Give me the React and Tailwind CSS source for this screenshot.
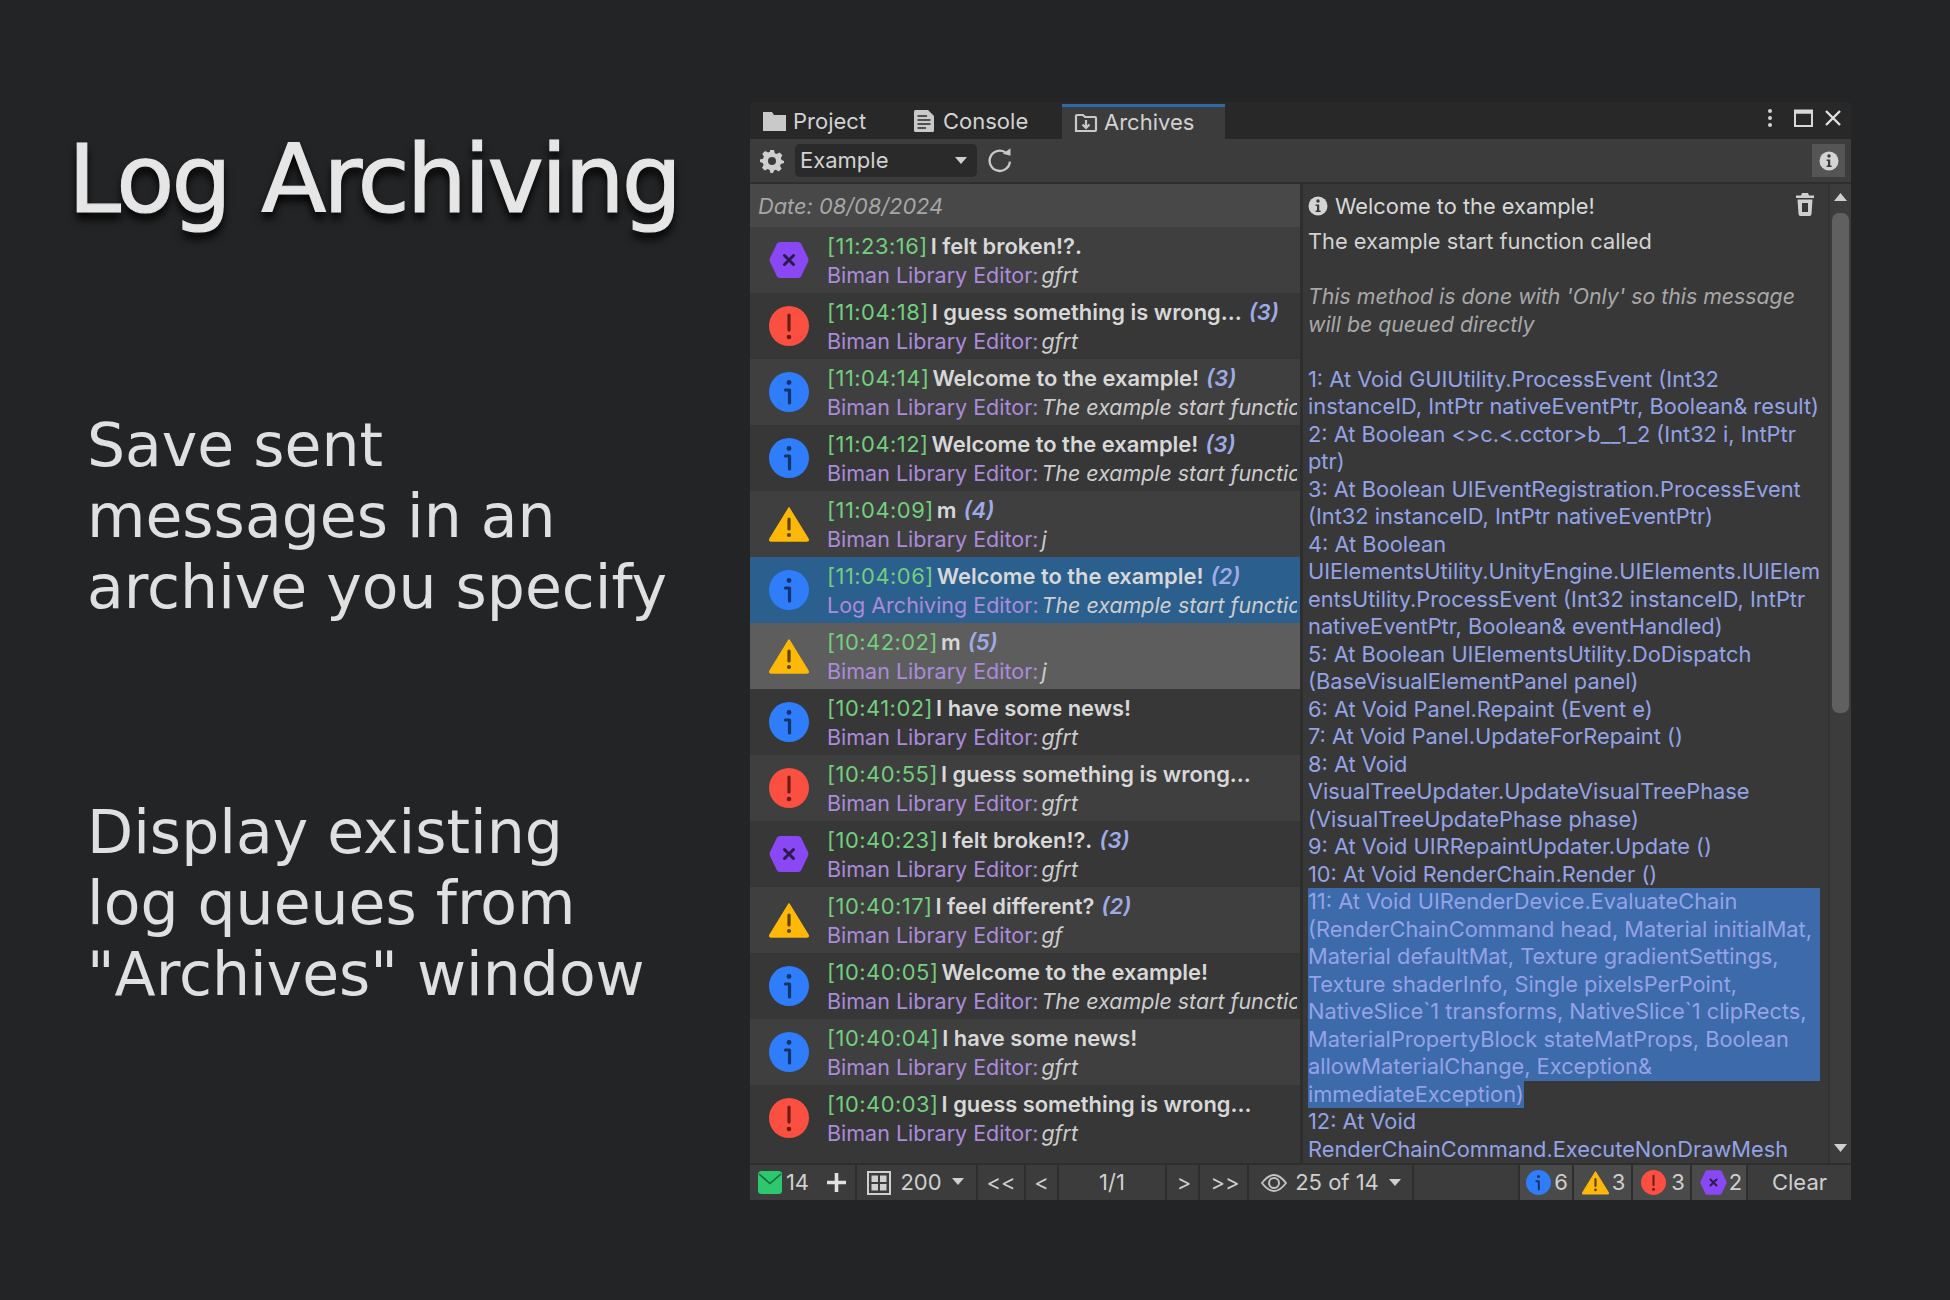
import React from "react";

const Hex = ({ s = 40 }) => (
  <svg width={s} height={s} viewBox="0 0 40 40">
    <path d="M8 3.5 Q9 2 11 2 H29 Q31 2 32 3.5 L39 18 Q39.9 20 39 22 L32 36.5 Q31 38 29 38 H11 Q9 38 8 36.5 L1 22 Q0.1 20 1 18 Z" fill="#8a48f4" />
    <path d="M15.5 15.5 L24.5 24.5 M24.5 15.5 L15.5 24.5" stroke="#2c1a4d" strokeWidth="3" strokeLinecap="round" />
  </svg>
);
const Err = ({ s = 40 }) => (
  <svg width={s} height={s} viewBox="0 0 40 40">
    <circle cx="20" cy="20" r="20" fill="#fa4f41" />
    <path d="M20 9 V24" stroke="#6a1c16" strokeWidth="3.2" strokeLinecap="round" />
    <circle cx="20" cy="31" r="2.3" fill="#6a1c16" />
  </svg>
);
const Info = ({ s = 40 }) => (
  <svg width={s} height={s} viewBox="0 0 40 40">
    <circle cx="20" cy="20" r="20" fill="#2f7dfb" />
    <circle cx="20" cy="10.5" r="2.4" fill="#13336b" />
    <path d="M16.5 18 H20.5 V31" fill="none" stroke="#13336b" strokeWidth="3.2" strokeLinecap="round" strokeLinejoin="round" />
  </svg>
);
const Warn = ({ s = 40 }) => (
  <svg width={s} height={s} viewBox="0 0 40 40">
    <path d="M20 4 L39 35 Q40 37 37.5 37 H2.5 Q0 37 1 35 Z" fill="#fdb808" stroke="#fdb808" strokeWidth="1.5" strokeLinejoin="round" />
    <path d="M20 15 V25" stroke="#5c4308" strokeWidth="3.2" strokeLinecap="round" />
    <circle cx="20" cy="31" r="2.1" fill="#5c4308" />
  </svg>
);
const icons = { hex: Hex, err: Err, info: Info, warn: Warn };

const rows = [
  ["hex", "[11:23:16]", "I felt broken!?.", "", "Biman Library Editor:", "gfrt"],
  ["err", "[11:04:18]", "I guess something is wrong...", "(3)", "Biman Library Editor:", "gfrt"],
  ["info", "[11:04:14]", "Welcome to the example!", "(3)", "Biman Library Editor:", "The example start function called"],
  ["info", "[11:04:12]", "Welcome to the example!", "(3)", "Biman Library Editor:", "The example start function called"],
  ["warn", "[11:04:09]", "m", "(4)", "Biman Library Editor:", "j"],
  ["info", "[11:04:06]", "Welcome to the example!", "(2)", "Log Archiving Editor:", "The example start function called"],
  ["warn", "[10:42:02]", "m", "(5)", "Biman Library Editor:", "j"],
  ["info", "[10:41:02]", "I have some news!", "", "Biman Library Editor:", "gfrt"],
  ["err", "[10:40:55]", "I guess something is wrong...", "", "Biman Library Editor:", "gfrt"],
  ["hex", "[10:40:23]", "I felt broken!?.", "(3)", "Biman Library Editor:", "gfrt"],
  ["warn", "[10:40:17]", "I feel different?", "(2)", "Biman Library Editor:", "gf"],
  ["info", "[10:40:05]", "Welcome to the example!", "", "Biman Library Editor:", "The example start function called"],
  ["info", "[10:40:04]", "I have some news!", "", "Biman Library Editor:", "gfrt"],
  ["err", "[10:40:03]", "I guess something is wrong...", "", "Biman Library Editor:", "gfrt"],
];

const linesA = [
  "1: At Void GUIUtility.ProcessEvent (Int32",
  "instanceID, IntPtr nativeEventPtr, Boolean& result)",
  "2: At Boolean <>c.<.cctor>b__1_2 (Int32 i, IntPtr",
  "ptr)",
  "3: At Boolean UIEventRegistration.ProcessEvent",
  "(Int32 instanceID, IntPtr nativeEventPtr)",
  "4: At Boolean",
  "UIElementsUtility.UnityEngine.UIElements.IUIElem",
  "entsUtility.ProcessEvent (Int32 instanceID, IntPtr",
  "nativeEventPtr, Boolean& eventHandled)",
  "5: At Boolean UIElementsUtility.DoDispatch",
  "(BaseVisualElementPanel panel)",
  "6: At Void Panel.Repaint (Event e)",
  "7: At Void Panel.UpdateForRepaint ()",
  "8: At Void",
  "VisualTreeUpdater.UpdateVisualTreePhase",
  "(VisualTreeUpdatePhase phase)",
  "9: At Void UIRRepaintUpdater.Update ()",
  "10: At Void RenderChain.Render ()",
];
const linesSel = [
  "11: At Void UIRenderDevice.EvaluateChain",
  "(RenderChainCommand head, Material initialMat,",
  "Material defaultMat, Texture gradientSettings,",
  "Texture shaderInfo, Single pixelsPerPoint,",
  "NativeSlice`1 transforms, NativeSlice`1 clipRects,",
  "MaterialPropertyBlock stateMatProps, Boolean",
  "allowMaterialChange, Exception&",
];
const linesB = ["12: At Void", "RenderChainCommand.ExecuteNonDrawMesh"];

function Row({ r, i }) {
  const Icon = icons[r[0]];
  const bg =
    i === 5 ? "bg-[#2b5f8e]" : i === 6 ? "bg-[#5d5d5d]" : i % 2 === 0 ? "bg-[#3f3f3f]" : "bg-[#373737]";
  return (
    <div className={`flex h-[66px] shrink-0 items-center overflow-hidden pr-[3px] ${bg}`}>
      <div className="flex w-[77px] shrink-0 justify-center">
        <Icon />
      </div>
      <div className="min-w-0 flex-1 overflow-hidden whitespace-nowrap leading-[30px]">
        <div className="flex text-[21.9px]">
          <span className="tracking-[0.5px] text-[#73cf7e]">{r[1]}</span>
          <span className="ml-[3px] font-semibold text-[#d8d8d8]">{r[2]}</span>
          {r[3] && <span className="ml-[7px] font-semibold italic text-[#9fabe6]">{r[3]}</span>}
        </div>
        <div className="-mt-[1px] flex">
          <span className="text-[21.5px] text-[#ab8bdb]">{r[4]}</span>
          <span className="ml-[3px] text-[21.4px] italic text-[#cdcdcd]">{r[5]}</span>
        </div>
      </div>
    </div>
  );
}

const Seg = ({ className = "", children }) => (
  <div className={`flex h-full shrink-0 items-center justify-center border-r-[2px] border-[#2e2e2e] bg-[#3c3c3c] ${className}`}>
    {children}
  </div>
);

const Caret = ({ className = "" }) => (
  <svg width="14" height="9" viewBox="0 0 14 9" className={className}>
    <path d="M1 1 H13 L7 8 Z" fill="#cfcfcf" />
  </svg>
);

const InfoMono = ({ s = 20 }) => (
  <svg width={s} height={s} viewBox="0 0 20 20">
    <circle cx="10" cy="10" r="9.5" fill="#d4d4d4" />
    <circle cx="10" cy="5" r="1.7" fill="#3a3a3a" />
    <path d="M7.6 8.5 H11.2 V14.5 H12.6 V16 H7.6 V14.5 H9 V10 H7.6 Z" fill="#3a3a3a" />
  </svg>
);

export default function App() {
  return (
    <div className="flex h-[1300px] w-[1950px] overflow-hidden bg-[#232426] font-['Inter',sans-serif]">
      <div className="w-[750px] shrink-0 font-['DejaVu_Sans',sans-serif]">
        <h1 className="ml-[68px] mt-[119px] whitespace-nowrap text-[95px] font-normal leading-[120px] tracking-[-2.9px] text-[#e6e6e6] [word-spacing:5px] [-webkit-text-stroke:1.2px_#e6e6e6] [text-shadow:0_7px_9px_#000]">
          Log Archiving
        </h1>
        <p className="ml-[87px] mt-[171px] text-[60px] leading-[71px] text-[#e0e0e0]">
          Save sent
          <br />
          messages in an
          <br />
          archive you specify
        </p>
        <p className="ml-[87px] mt-[174px] text-[60px] leading-[71px] text-[#e0e0e0]">
          Display existing
          <br />
          log queues from
          <br />
          "Archives" window
        </p>
      </div>

      <div className="mt-[102px] flex h-[1098px] w-[1101px] shrink-0 flex-col overflow-hidden rounded-t-[3px] bg-[#282828] text-[22px] text-[#d2d2d2]">
        {/* Tabs */}
        <div className="flex h-[37px] shrink-0 items-end pl-[13px]">
          <div className="flex h-[34px] w-[148px] items-center gap-[7px] pb-[2px]">
            <svg width="23" height="20" viewBox="0 0 23 20">
              <path d="M0 1 H9 L11 4 H23 V20 H0 Z" fill="#c9c9c9" />
            </svg>
            <span>Project</span>
          </div>
          <div className="flex h-[34px] w-[151px] items-center gap-[9px] pl-[3px] pb-[2px]">
            <svg width="20" height="22" viewBox="0 0 20 22">
              <path d="M0 1.5 Q0 0 1.5 0 H14 L20 6 V20.5 Q20 22 18.5 22 H1.5 Q0 22 0 20.5 Z" fill="#c9c9c9" />
              <path d="M3.5 6 H13 M3.5 10 H16.5 M3.5 14 H16.5 M3.5 18 H12" stroke="#282828" strokeWidth="1.7" />
            </svg>
            <span>Console</span>
          </div>
          <div className="flex h-[35px] w-[163px] items-center gap-[6px] border-t-[3px] border-[#2a6ca3] bg-[#3c3c3c] pl-[12px] pb-[1px]">
            <svg width="24" height="20" viewBox="0 0 24 20" fill="none" stroke="#c9c9c9" strokeWidth="2.2">
              <path d="M2 18 V3 Q2 2 3 2 H9 L11 4 H21 Q22 4 22 5 V17 Q22 18 21 18 Z" />
              <path d="M12 7 V15 M8.5 11.5 L12 15 L15.5 11.5" />
            </svg>
            <span>Archives</span>
          </div>
          <div className="flex h-[37px] flex-1 items-center justify-end pr-[10px] pb-[5px]">
            <svg width="6" height="20" viewBox="0 0 6 20" fill="#d2d2d2">
              <circle cx="3" cy="3" r="2" />
              <circle cx="3" cy="10" r="2" />
              <circle cx="3" cy="17" r="2" />
            </svg>
            <svg className="ml-[21px]" width="19" height="18" viewBox="0 0 19 18" fill="none" stroke="#d8d8d8">
              <rect x="1" y="1.5" width="17" height="15.5" strokeWidth="2" />
              <path d="M1 3 H18" strokeWidth="3.5" />
            </svg>
            <svg className="ml-[12px]" width="16" height="16" viewBox="0 0 16 16" stroke="#e0e0e0" strokeWidth="2.4">
              <path d="M1 1 L15 15 M15 1 L1 15" />
            </svg>
          </div>
        </div>
        {/* Toolbar */}
        <div className="flex h-[45px] shrink-0 items-center border-b-[2px] border-[#2e2e2e] bg-[#3c3c3c] pl-[10px] pr-[6px]">
          <svg width="24" height="24" viewBox="0 0 24 24" fill="#cfcfcf">
            <path fillRule="evenodd" d="M10 1 H14 L14.8 4.2 L16.7 5 L19.6 3.4 L22.4 6.2 L20.8 9.1 L21.6 11 L24 12 L24 14 L20.9 14.9 L20 16.8 L21.6 19.7 L18.8 22.4 L15.9 20.8 L14 21.6 L13 24 H10.5 L9.7 20.9 L7.7 20.1 L4.8 21.6 L2 18.8 L3.6 15.9 L2.8 14 L0 13 V10.5 L3 9.7 L3.9 7.7 L2.3 4.8 L5.2 2 L8.1 3.6 L10 2.8 Z M12 8 A4 4 0 1 0 12 16 A4 4 0 1 0 12 8 Z" />
          </svg>
          <div className="ml-[11px] flex h-[33px] w-[182px] items-center justify-between rounded-[5px] bg-[#2a2a2a] pl-[5px] pr-[9px]">
            <span>Example</span>
            <Caret />
          </div>
          <svg className="ml-[9px]" width="28" height="28" viewBox="0 0 24 24" fill="none" stroke="#c8c8c8" strokeWidth="2">
            <path d="M20.5 12.5 A8.7 8.7 0 1 1 17.5 5.2" />
            <path d="M14.5 5.8 L21 7.5 L21 1 Z" fill="#c8c8c8" stroke="none" />
          </svg>
          <div className="ml-auto flex h-[33px] w-[33px] items-center justify-center bg-[#555555]">
            <InfoMono />
          </div>
        </div>
        {/* Body */}
        <div className="flex min-h-0 flex-1">
          <div className="flex w-[550px] shrink-0 flex-col overflow-hidden bg-[#373737]">
            <div className="flex h-[43px] shrink-0 items-center bg-[#484848] pl-[8px] pt-[1px] text-[21.8px] italic text-[#a6a6a6]">
              Date: 08/08/2024
            </div>
            {rows.map((r, i) => (
              <Row key={i} r={r} i={i} />
            ))}
          </div>
          <div className="w-[3px] shrink-0 bg-[#2e2e2e]" />
          <div className="relative min-w-0 flex-1 overflow-hidden bg-[#383838] pl-[5px] pt-[8.5px] text-[21.8px] whitespace-nowrap leading-[27.5px]">
            <div className="flex h-[27.5px] items-center gap-[7px] text-[#d8d8d8]">
              <InfoMono />
              <span>Welcome to the example!</span>
            </div>
            <div className="mt-[8px] text-[#d2d2d2]">The example start function called</div>
            <div className="mt-[27.5px] text-[21.3px] italic text-[#a8a8a8]">This method is done with 'Only' so this message</div>
            <div className="text-[21.3px] italic text-[#a8a8a8]">will be queued directly</div>
            <div className="mt-[27.5px] text-[#94a3e6]">
              {linesA.map((l) => (
                <div key={l}>{l}</div>
              ))}
              <div className="w-[512px] bg-[#3c6aab]">
                {linesSel.map((l) => (
                  <div key={l}>{l}</div>
                ))}
              </div>
              <div className="w-fit bg-[#3c6aab]">immediateException)</div>
              {linesB.map((l) => (
                <div key={l}>{l}</div>
              ))}
            </div>
            <svg className="absolute right-[14px] top-[9px]" width="18" height="23" viewBox="0 0 18 23" fill="#cfcfcf">
              <path d="M6 0 H12 L13 2.5 H18 V5 H0 V2.5 H5 Z" />
              <path fillRule="evenodd" d="M1.5 6.5 H16.5 L15.5 21 Q15.4 23 13.5 23 H4.5 Q2.6 23 2.5 21 Z M6 10 V19 H12 V10 Z" />
            </svg>
          </div>
          {/* Scrollbar */}
          <div className="flex w-[23px] shrink-0 flex-col items-center border-l-[2px] border-[#333333] bg-[#3c3c3c] pt-[9px]">
            <svg width="13" height="8" viewBox="0 0 13 8">
              <path d="M6.5 0 L13 8 H0 Z" fill="#cfcfcf" />
            </svg>
            <div className="mt-[12px] h-[500px] w-[17px] rounded-[7px] bg-[#606060]" />
            <svg className="mt-auto mb-[11px]" width="13" height="8" viewBox="0 0 13 8">
              <path d="M0 0 H13 L6.5 8 Z" fill="#cfcfcf" />
            </svg>
          </div>
        </div>
        {/* Bottom bar */}
        <div className="flex h-[37px] shrink-0 border-t-[2px] border-[#2e2e2e] text-[#cfcfcf]">
          <Seg className="w-[107px] gap-[4px] pr-[1px]">
            <svg width="24" height="23" viewBox="0 0 24 23">
              <rect width="24" height="23" rx="3.5" fill="#2dc76d" />
              <path d="M1 3 L12 12.5 L23 3" fill="none" stroke="#17693a" strokeWidth="1.6" />
            </svg>
            <span>14</span>
            <svg className="ml-[14px]" width="19" height="19" viewBox="0 0 19 19" stroke="#e2e2e2" strokeWidth="3.6">
              <path d="M9.5 0 V19 M0 9.5 H19" />
            </svg>
          </Seg>
          <Seg className="w-[121px] gap-[9px] pr-[1px]">
            <svg width="24" height="24" viewBox="0 0 24 24" fill="#cfcfcf">
              <path fillRule="evenodd" d="M0 0 H24 V24 H0 Z M2 2 V22 H22 V2 Z" />
              <rect x="4.5" y="4.5" width="6.5" height="6.5" />
              <rect x="13" y="4.5" width="6.5" height="6.5" />
              <rect x="4.5" y="13" width="6.5" height="6.5" />
              <rect x="13" y="13" width="6.5" height="6.5" />
            </svg>
            <span>200</span>
            <Caret className="-mt-[3px]" />
          </Seg>
          <Seg className="w-[48px]">&lt;&lt;</Seg>
          <Seg className="w-[33px]">&lt;</Seg>
          <Seg className="w-[108px]">1/1</Seg>
          <Seg className="w-[33px] pl-[3px]">&gt;</Seg>
          <Seg className="w-[49px] pl-[3px]">&gt;&gt;</Seg>
          <Seg className="w-[165px] gap-[8px] pl-[2px]">
            <svg width="26" height="20" viewBox="0 0 26 20" fill="none" stroke="#c4c4c4">
              <path d="M1 10 Q13 -6 25 10 Q13 26 1 10 Z" strokeWidth="1.8" />
              <circle cx="13" cy="10" r="5" strokeWidth="2" />
            </svg>
            <span>25 of 14</span>
            <Caret className="ml-[1px]" />
          </Seg>
          <Seg className="w-[106px]" />
          <Seg className="w-[54px] gap-[3px] pl-[2px] !bg-[#4a4a4a]">
            <Info s={25} />
            <span>6</span>
          </Seg>
          <Seg className="w-[59px] gap-[3px] pl-[2px] !bg-[#4a4a4a]">
            <Warn s={27} />
            <span>3</span>
          </Seg>
          <Seg className="w-[59px] gap-[5px] pl-[3px] !bg-[#4a4a4a]">
            <Err s={25} />
            <span>3</span>
          </Seg>
          <Seg className="w-[56px] gap-[2px] pl-[4px] !bg-[#4a4a4a]">
            <Hex s={27} />
            <span>2</span>
          </Seg>
          <div className="flex flex-1 items-center justify-center bg-[#3c3c3c]">Clear</div>
        </div>
      </div>
    </div>
  );
}
